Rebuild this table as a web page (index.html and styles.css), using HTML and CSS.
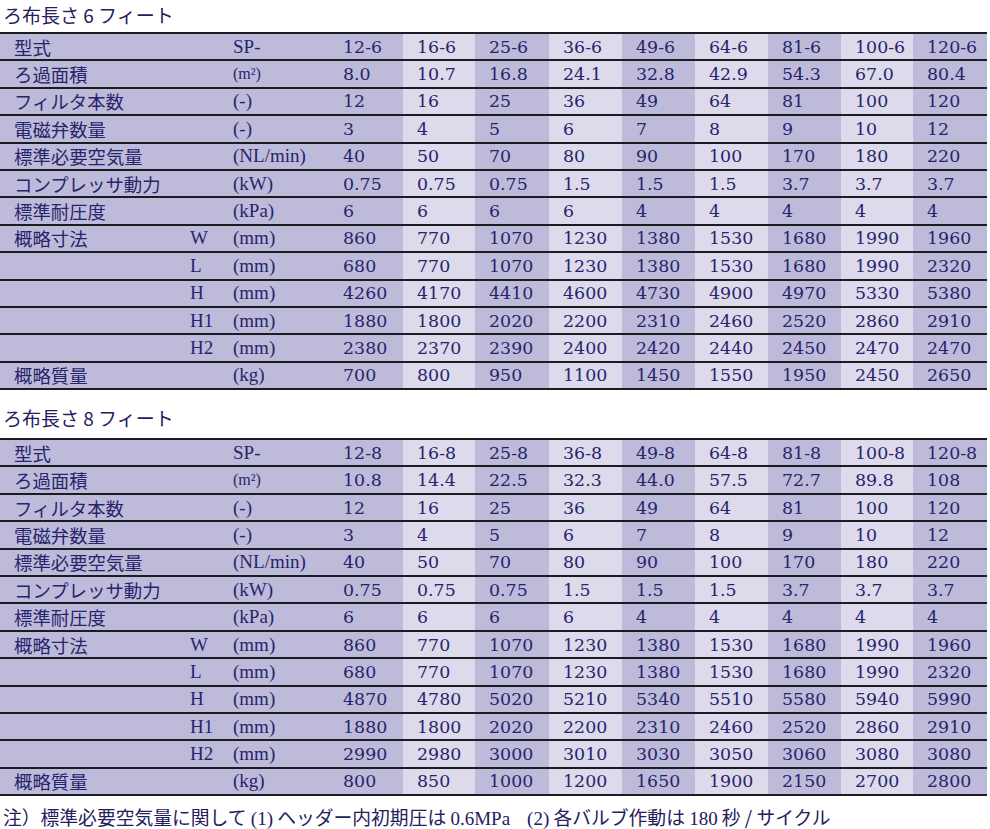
FILE: index.html
```html
<!DOCTYPE html>
<html lang="ja">
<head>
<meta charset="utf-8">
<title>仕様表</title>
<link rel="stylesheet" href="styles.css">
</head>
<body>
<div class="title">ろ布長さ 6 フィート</div>
<div class="tbl">
  <div class="row"><div class="lab">型式</div><div class="sub"></div><div class="unit">SP-</div><div class="c">12-6</div><div class="c">16-6</div><div class="c">25-6</div><div class="c">36-6</div><div class="c">49-6</div><div class="c">64-6</div><div class="c">81-6</div><div class="c">100-6</div><div class="c">120-6</div></div>
  <div class="row"><div class="lab">ろ過面積</div><div class="sub"></div><div class="unit sm">(m²)</div><div class="c">8.0</div><div class="c">10.7</div><div class="c">16.8</div><div class="c">24.1</div><div class="c">32.8</div><div class="c">42.9</div><div class="c">54.3</div><div class="c">67.0</div><div class="c">80.4</div></div>
  <div class="row"><div class="lab">フィルタ本数</div><div class="sub"></div><div class="unit">(-)</div><div class="c">12</div><div class="c">16</div><div class="c">25</div><div class="c">36</div><div class="c">49</div><div class="c">64</div><div class="c">81</div><div class="c">100</div><div class="c">120</div></div>
  <div class="row"><div class="lab">電磁弁数量</div><div class="sub"></div><div class="unit">(-)</div><div class="c">3</div><div class="c">4</div><div class="c">5</div><div class="c">6</div><div class="c">7</div><div class="c">8</div><div class="c">9</div><div class="c">10</div><div class="c">12</div></div>
  <div class="row"><div class="lab">標準必要空気量</div><div class="sub"></div><div class="unit">(NL/min)</div><div class="c">40</div><div class="c">50</div><div class="c">70</div><div class="c">80</div><div class="c">90</div><div class="c">100</div><div class="c">170</div><div class="c">180</div><div class="c">220</div></div>
  <div class="row"><div class="lab">コンプレッサ動力</div><div class="sub"></div><div class="unit">(kW)</div><div class="c">0.75</div><div class="c">0.75</div><div class="c">0.75</div><div class="c">1.5</div><div class="c">1.5</div><div class="c">1.5</div><div class="c">3.7</div><div class="c">3.7</div><div class="c">3.7</div></div>
  <div class="row"><div class="lab">標準耐圧度</div><div class="sub"></div><div class="unit">(kPa)</div><div class="c">6</div><div class="c">6</div><div class="c">6</div><div class="c">6</div><div class="c">4</div><div class="c">4</div><div class="c">4</div><div class="c">4</div><div class="c">4</div></div>
  <div class="row"><div class="lab">概略寸法</div><div class="sub">W</div><div class="unit">(mm)</div><div class="c">860</div><div class="c">770</div><div class="c">1070</div><div class="c">1230</div><div class="c">1380</div><div class="c">1530</div><div class="c">1680</div><div class="c">1990</div><div class="c">1960</div></div>
  <div class="row"><div class="lab"></div><div class="sub">L</div><div class="unit">(mm)</div><div class="c">680</div><div class="c">770</div><div class="c">1070</div><div class="c">1230</div><div class="c">1380</div><div class="c">1530</div><div class="c">1680</div><div class="c">1990</div><div class="c">2320</div></div>
  <div class="row"><div class="lab"></div><div class="sub">H</div><div class="unit">(mm)</div><div class="c">4260</div><div class="c">4170</div><div class="c">4410</div><div class="c">4600</div><div class="c">4730</div><div class="c">4900</div><div class="c">4970</div><div class="c">5330</div><div class="c">5380</div></div>
  <div class="row"><div class="lab"></div><div class="sub">H1</div><div class="unit">(mm)</div><div class="c">1880</div><div class="c">1800</div><div class="c">2020</div><div class="c">2200</div><div class="c">2310</div><div class="c">2460</div><div class="c">2520</div><div class="c">2860</div><div class="c">2910</div></div>
  <div class="row"><div class="lab"></div><div class="sub">H2</div><div class="unit">(mm)</div><div class="c">2380</div><div class="c">2370</div><div class="c">2390</div><div class="c">2400</div><div class="c">2420</div><div class="c">2440</div><div class="c">2450</div><div class="c">2470</div><div class="c">2470</div></div>
  <div class="row"><div class="lab">概略質量</div><div class="sub"></div><div class="unit">(kg)</div><div class="c">700</div><div class="c">800</div><div class="c">950</div><div class="c">1100</div><div class="c">1450</div><div class="c">1550</div><div class="c">1950</div><div class="c">2450</div><div class="c">2650</div></div>
</div>
<div class="title title2">ろ布長さ 8 フィート</div>
<div class="tbl">
  <div class="row"><div class="lab">型式</div><div class="sub"></div><div class="unit">SP-</div><div class="c">12-8</div><div class="c">16-8</div><div class="c">25-8</div><div class="c">36-8</div><div class="c">49-8</div><div class="c">64-8</div><div class="c">81-8</div><div class="c">100-8</div><div class="c">120-8</div></div>
  <div class="row"><div class="lab">ろ過面積</div><div class="sub"></div><div class="unit sm">(m²)</div><div class="c">10.8</div><div class="c">14.4</div><div class="c">22.5</div><div class="c">32.3</div><div class="c">44.0</div><div class="c">57.5</div><div class="c">72.7</div><div class="c">89.8</div><div class="c">108</div></div>
  <div class="row"><div class="lab">フィルタ本数</div><div class="sub"></div><div class="unit">(-)</div><div class="c">12</div><div class="c">16</div><div class="c">25</div><div class="c">36</div><div class="c">49</div><div class="c">64</div><div class="c">81</div><div class="c">100</div><div class="c">120</div></div>
  <div class="row"><div class="lab">電磁弁数量</div><div class="sub"></div><div class="unit">(-)</div><div class="c">3</div><div class="c">4</div><div class="c">5</div><div class="c">6</div><div class="c">7</div><div class="c">8</div><div class="c">9</div><div class="c">10</div><div class="c">12</div></div>
  <div class="row"><div class="lab">標準必要空気量</div><div class="sub"></div><div class="unit">(NL/min)</div><div class="c">40</div><div class="c">50</div><div class="c">70</div><div class="c">80</div><div class="c">90</div><div class="c">100</div><div class="c">170</div><div class="c">180</div><div class="c">220</div></div>
  <div class="row"><div class="lab">コンプレッサ動力</div><div class="sub"></div><div class="unit">(kW)</div><div class="c">0.75</div><div class="c">0.75</div><div class="c">0.75</div><div class="c">1.5</div><div class="c">1.5</div><div class="c">1.5</div><div class="c">3.7</div><div class="c">3.7</div><div class="c">3.7</div></div>
  <div class="row"><div class="lab">標準耐圧度</div><div class="sub"></div><div class="unit">(kPa)</div><div class="c">6</div><div class="c">6</div><div class="c">6</div><div class="c">6</div><div class="c">4</div><div class="c">4</div><div class="c">4</div><div class="c">4</div><div class="c">4</div></div>
  <div class="row"><div class="lab">概略寸法</div><div class="sub">W</div><div class="unit">(mm)</div><div class="c">860</div><div class="c">770</div><div class="c">1070</div><div class="c">1230</div><div class="c">1380</div><div class="c">1530</div><div class="c">1680</div><div class="c">1990</div><div class="c">1960</div></div>
  <div class="row"><div class="lab"></div><div class="sub">L</div><div class="unit">(mm)</div><div class="c">680</div><div class="c">770</div><div class="c">1070</div><div class="c">1230</div><div class="c">1380</div><div class="c">1530</div><div class="c">1680</div><div class="c">1990</div><div class="c">2320</div></div>
  <div class="row"><div class="lab"></div><div class="sub">H</div><div class="unit">(mm)</div><div class="c">4870</div><div class="c">4780</div><div class="c">5020</div><div class="c">5210</div><div class="c">5340</div><div class="c">5510</div><div class="c">5580</div><div class="c">5940</div><div class="c">5990</div></div>
  <div class="row"><div class="lab"></div><div class="sub">H1</div><div class="unit">(mm)</div><div class="c">1880</div><div class="c">1800</div><div class="c">2020</div><div class="c">2200</div><div class="c">2310</div><div class="c">2460</div><div class="c">2520</div><div class="c">2860</div><div class="c">2910</div></div>
  <div class="row"><div class="lab"></div><div class="sub">H2</div><div class="unit">(mm)</div><div class="c">2990</div><div class="c">2980</div><div class="c">3000</div><div class="c">3010</div><div class="c">3030</div><div class="c">3050</div><div class="c">3060</div><div class="c">3080</div><div class="c">3080</div></div>
  <div class="row"><div class="lab">概略質量</div><div class="sub"></div><div class="unit">(kg)</div><div class="c">800</div><div class="c">850</div><div class="c">1000</div><div class="c">1200</div><div class="c">1650</div><div class="c">1900</div><div class="c">2150</div><div class="c">2700</div><div class="c">2800</div></div>
</div>
<p class="note">注）標準必要空気量に関して <span class="lat">(1)</span> ヘッダー内初期圧は <span class="lat">0.6MPa</span><span class="gap"></span><span class="lat">(2)</span> 各バルブ作動は <span class="lat">180</span> 秒 / サイクル</p>
</body>
</html>
```

FILE: styles.css
```css
html, body {
  margin: 0;
  padding: 0;
  background: #ffffff;
}

body {
  color: #27246c;
  width: 990px;
}

.title {
  height: 32px;
  padding-left: 3px;
  box-sizing: border-box;
  font-family: "Noto Sans CJK JP", sans-serif;
  font-size: 19px;
  line-height: 30px;
  color: #23205e;
}

.title2 {
  height: 48px;
  padding-top: 13px;
}

.tbl {
  width: 987px;
  border-bottom: 2px solid #1d1b22;
}

.row {
  display: grid;
  grid-template-columns: 190px 43px 96px 74px 72px 74px 73px 73px 73px 73px 72px 74px;
  height: 27.4px;
  box-sizing: border-box;
  border-top: 2px solid #1d1b22;
}

.row > div {
  display: flex;
  align-items: center;
  white-space: nowrap;
  overflow: hidden;
}

.lab, .sub, .unit {
  background: #bdbbd9;
}

.lab {
  padding-left: 14px;
  font-family: "Noto Sans CJK JP", sans-serif;
  font-size: 18.4px;
}

.sub, .unit {
  font-family: "Liberation Serif", "Noto Sans CJK JP", serif;
  font-size: 19px;
}

.unit.sm {
  font-size: 16px;
}

.c {
  padding-left: 14px;
  font-family: "DejaVu Serif", serif;
  font-size: 17.4px;
  background: #dcdaeb;
}

.c:nth-child(even) {
  background: #bdbbd9;
}

.note {
  margin: 0;
  padding: 9px 0 0 3px;
  font-family: "Noto Sans CJK JP", sans-serif;
  font-size: 18.8px;
  line-height: 24px;
  color: #23205e;
  white-space: nowrap;
}

.lat {
  font-family: "Liberation Serif", serif;
  font-size: 19px;
}

.gap {
  display: inline-block;
  width: 17px;
}
```
